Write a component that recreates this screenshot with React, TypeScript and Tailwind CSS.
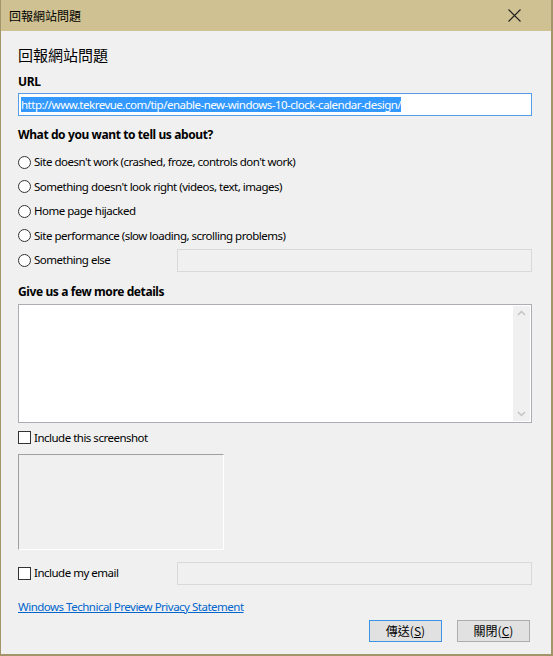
import React from "react";

const ui = { fontFamily: '"Noto Sans", "Noto Sans CJK TC", sans-serif' };
const cjk = { fontFamily: '"Noto Sans CJK TC", "Noto Sans", sans-serif' };

function Radio({ label, children }: { label: string; children?: React.ReactNode }) {
    return (
        <div className="flex items-center h-[24.5px]">
            <span className="w-[13px] h-[13px] rounded-full border border-[#333] bg-white shrink-0" />
            <span className="ml-[3px] text-[11.5px] tracking-[-0.5px] leading-[16px] text-black w-[141px] whitespace-nowrap">{label}</span>
            {children}
        </div>
    );
}

function Checkbox({ label }: { label: string }) {
    return (
        <div className="flex items-center">
            <span className="w-[13px] h-[13px] border border-[#333] bg-white shrink-0" />
            <span className="ml-[3px] text-[11.5px] tracking-[-0.5px] leading-[16px] text-black w-[141px] whitespace-nowrap">{label}</span>
        </div>
    );
}

function DisabledBox() {
    return <div className="flex-1 h-[23px] border border-[#d9d9d9] bg-[#f0f0f0]" />;
}

export default function App() {
    return (
        <div className="w-[553px] h-[656px] bg-[#f0f0f0] border-l border-r-2 border-b-2 border-[#a3956a] flex flex-col" style={ui}>
            <div className="h-[31px] bg-[#cfc191] flex items-center justify-between pl-[8px] pr-[30px] shrink-0">
                <span className="text-[12px] text-black" style={cjk}>回報網站問題</span>
                <svg width="13" height="13" viewBox="0 0 13 13" className="text-[#222]">
                    <path d="M0.5 0.5 L12.5 12.5 M12.5 0.5 L0.5 12.5" stroke="currentColor" strokeWidth="1.1" fill="none" />
                </svg>
            </div>

            <div className="flex flex-col pl-[17px] pr-[19px]">
                <div className="mt-[14px] text-[15px] leading-[20px] text-black" style={cjk}>回報網站問題</div>

                <div className="mt-[9px] text-[12px] tracking-[-0.4px] leading-[16px] font-bold text-black">URL</div>
                <div className="mt-[3px] h-[23px] border border-[#569de5] bg-white flex items-center px-[2px]">
                    <span className="bg-[#3399ff] text-white text-[11.5px] tracking-[-0.5px] leading-[15px] whitespace-nowrap">http://www.tekrevue.com/tip/enable-new-windows-10-clock-calendar-design/</span>
                </div>

                <div className="mt-[11px] text-[12px] tracking-[-0.4px] leading-[16px] font-bold text-black">What do you want to tell us about?</div>
                <div className="mt-[7px] flex flex-col">
                    <Radio label="Site doesn't work (crashed, froze, controls don't work)" />
                    <Radio label="Something doesn't look right (videos, text, images)" />
                    <Radio label="Home page hijacked" />
                    <Radio label="Site performance (slow loading, scrolling problems)" />
                    <Radio label="Something else">
                        <span className="ml-[2px]" />
                        <DisabledBox />
                    </Radio>
                </div>

                <div className="mt-[11px] text-[12px] tracking-[-0.4px] leading-[16px] font-bold text-black">Give us a few more details</div>
                <div className="mt-[4px] h-[119px] border border-[#abadb3] bg-white flex justify-end p-[1px]">
                    <div className="w-[17px] bg-[#f0f0f0] flex flex-col items-center justify-between py-[4px]">
                        <svg width="9" height="6" viewBox="0 0 9 6"><path d="M1 5 L4.5 1.5 L8 5" stroke="#c2c2c2" strokeWidth="1.5" fill="none" /></svg>
                        <svg width="9" height="6" viewBox="0 0 9 6"><path d="M1 1 L4.5 4.5 L8 1" stroke="#c2c2c2" strokeWidth="1.5" fill="none" /></svg>
                    </div>
                </div>

                <div className="mt-[7px]">
                    <Checkbox label="Include this screenshot" />
                </div>
                <div className="mt-[8px] w-[206px] h-[96px] border border-t-[#a0a0a0] border-l-[#a0a0a0] border-r-white border-b-white" />

                <div className="mt-[12px] flex items-center h-[23px]">
                    <Checkbox label="Include my email" />
                    <span className="ml-[2px]" />
                    <DisabledBox />
                </div>

                <a className="mt-[14px] text-[11.5px] tracking-[-0.5px] leading-[16px] text-[#0066cc] underline self-start">Windows Technical Preview Privacy Statement</a>

                <div className="mt-[5px] flex justify-end gap-[15px] pr-[2px]">
                    <button className="w-[73px] h-[22px] border border-[#3c94e6] bg-[#e1e1e1] text-[12px] text-black flex items-center justify-center" style={cjk}>
                        傳送(<span className="underline">S</span>)
                    </button>
                    <button className="w-[73px] h-[22px] border border-[#adadad] bg-[#e1e1e1] text-[12px] text-black flex items-center justify-center" style={cjk}>
                        關閉(<span className="underline">C</span>)
                    </button>
                </div>
            </div>
        </div>
    );
}
